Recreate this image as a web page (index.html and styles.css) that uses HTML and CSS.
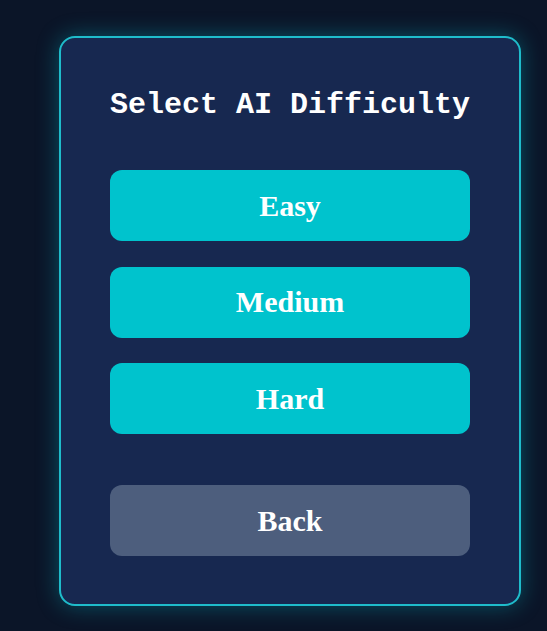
FILE: index.html
```html
<!DOCTYPE html>
<html>
<head>
<meta charset="utf-8">
<link rel="stylesheet" href="styles.css">
</head>
<body>
<div class="page">
  <div class="panel">
    <h2 class="title">Select AI Difficulty</h2>
    <div class="options">
      <button class="btn btn-primary">Easy</button>
      <button class="btn btn-primary">Medium</button>
      <button class="btn btn-primary">Hard</button>
      <button class="btn btn-back">Back</button>
    </div>
  </div>
</div>
</body>
</html>
```
FILE: styles.css
```css
html, body {
  margin: 0;
  padding: 0;
  height: 100%;
  background: #0b1528;
}
.page {
  padding: 36px 0 0 59px;
}
.panel {
  box-sizing: border-box;
  width: 462px;
  height: 570px;
  border: 2px solid #1fbccb;
  border-radius: 16px;
  background: #172850;
  padding: 50px 49px 0 49px;
  box-shadow: 0 0 22px rgba(0, 200, 215, 0.35);
}
.title {
  margin: 0 -10px;
  text-align: center;
  white-space: nowrap;
  font-family: "Liberation Mono", "Courier New", monospace;
  font-weight: bold;
  font-size: 30px;
  line-height: 34px;
  color: #ffffff;
}
.options {
  margin-top: 48px;
  display: flex;
  flex-direction: column;
  gap: 25.5px;
}
.btn {
  height: 71px;
  width: 360px;
  border: none;
  border-radius: 12px;
  font-family: "Liberation Serif", "Times New Roman", serif;
  font-weight: bold;
  font-size: 30px;
  color: #ffffff;
  padding: 0;
  cursor: pointer;
}
.btn-primary {
  background: #00c3cd;
}
.btn-back {
  background: #4d5e7d;
  margin-top: 25.5px;
}
```
